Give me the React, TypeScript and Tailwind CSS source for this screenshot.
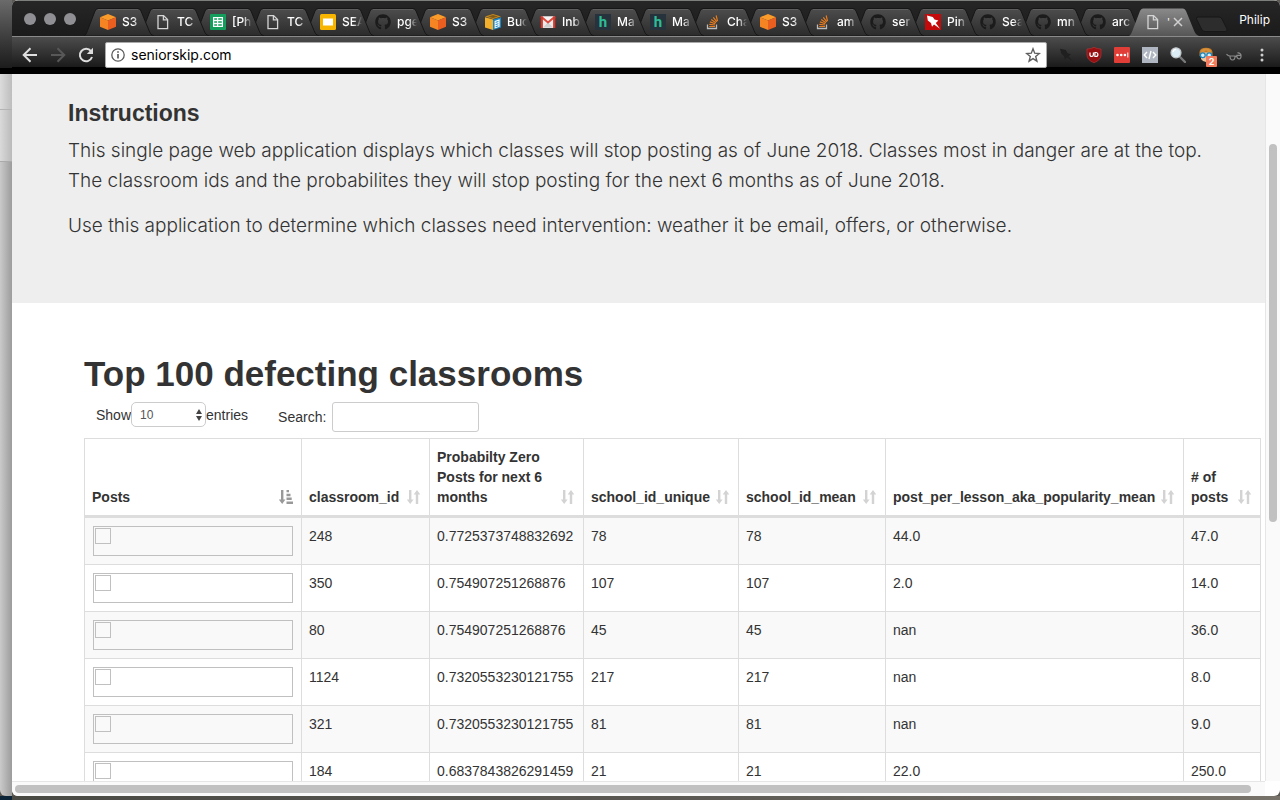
import type { ReactNode } from "react";
import { FaGithub } from "react-icons/fa";

const Cube = () => (
  <svg viewBox="0 0 16 16" className="size-4">
    <path d="M8 0 16 3.2 8 6.6 0 3.2Z" fill="#fb9b2a" />
    <path d="M0 3.2 8 6.6V16L0 12.8Z" fill="#f68422" />
    <path d="M16 3.2 8 6.6V16l8-3.2Z" fill="#ea5f1f" />
  </svg>
);

const Doc = () => (
  <svg viewBox="0 0 16 16" className="size-4" fill="none" stroke="#d4d4d4" strokeWidth="1.3">
    <path d="M3 1.6h5.6L12.6 5.6V14.6H3Z" />
    <path d="M8.4 1.8v4h4" />
  </svg>
);

const Sheet = () => (
  <svg viewBox="0 0 16 16" className="size-4">
    <rect width="16" height="16" rx="1" fill="#149e5b" />
    <path d="M3 3h10v10H3Z" fill="#fff" />
    <path d="M4.2 4.2H7v1.5H4.2ZM8.2 4.2h3.6v1.5H8.2ZM4.2 7.2H7v1.5H4.2ZM8.2 7.2h3.6v1.5H8.2ZM4.2 10.2H7v1.5H4.2ZM8.2 10.2h3.6v1.5H8.2Z" fill="#149e5b" />
  </svg>
);

const Slides = () => (
  <svg viewBox="0 0 16 16" className="size-4">
    <rect width="16" height="16" rx="1.5" fill="#f8b500" />
    <rect x="3" y="4.5" width="10" height="7" fill="#fff" />
  </svg>
);

const Bucket = () => (
  <svg viewBox="0 0 16 16" className="size-4">
    <path d="M8 0 16 2.6 8 5 0 2.6Z" fill="#c98a1c" />
    <path d="M8 1 13 2.6 8 4 3 2.6Z" fill="#7d5a1c" />
    <path d="M0 3.2 8 5.5V16L0 13.4Z" fill="#f3b02d" />
    <path d="M8 5.5 16 3.2V13.4L8 16Z" fill="#1f86c4" />
    <path d="M9.6 7 14.6 5.3V12.8L9.6 14.4Z" fill="#f4fbff" />
    <path d="M10.6 8.4l2.8-.9M10.6 10.6l2.8-.9M10.6 12.7l2.8-.9" stroke="#1f86c4" strokeWidth="1" />
  </svg>
);

const Gmail = () => (
  <svg viewBox="0 0 16 16" className="size-4">
    <path d="M1 2.5h14v11.5H1Z" fill="#ececec" />
    <path d="M3 13.5 8 8.6l5 4.9Z" fill="#cfcfcf" />
    <path d="M1 2.5 8 8.4 15 2.5" fill="#f5f5f5" stroke="#dd4b3e" strokeWidth="2" />
    <path d="M1.8 2.6V14M14.2 2.6V14" stroke="#d5392c" strokeWidth="2.2" />
  </svg>
);

const Hacker = () => (
  <span className="flex size-4 items-center justify-center bg-[#26323c] font-['Roboto',sans-serif] text-[15px] leading-4 font-bold text-[#2ebd95]">
    h
  </span>
);

const Stack = () => (
  <svg viewBox="0 0 16 16" className="size-4" fill="none">
    <path d="M2.5 10.5v4h9v-4" stroke="#bcbbbb" strokeWidth="1.3" />
    <path d="M4.2 12.5h5.8M4.3 10.3l5.7.7M4.9 7.9l5.4 1.9M6.2 5.5l4.7 3.3M8.3 3.3l3.5 4.6M11.2 1.5l1.3 5.7" stroke="#e87c1e" strokeWidth="1.2" />
  </svg>
);

const Octo = () => <FaGithub className="size-4 text-[#1b1b1b]" />;

const Pin = () => (
  <svg viewBox="0 0 16 16" className="size-4">
    <rect width="16" height="16" fill="#c40a0a" />
    <path d="M2 1.5 7.8 3 9.5 5.6 13.4 6.6 10.8 9 15 14.800 9 10.400 7 12.800 6 9 2.800 6.600Z" fill="#fff" />
  </svg>
);

const tabs: { icon: () => ReactNode; title: string }[] = [
  { icon: Cube, title: "S3" },
  { icon: Doc, title: "TC" },
  { icon: Sheet, title: "[Ph" },
  { icon: Doc, title: "TC" },
  { icon: Slides, title: "SEA" },
  { icon: Octo, title: "pge" },
  { icon: Cube, title: "S3" },
  { icon: Bucket, title: "Buc" },
  { icon: Gmail, title: "Inb" },
  { icon: Hacker, title: "Ma" },
  { icon: Hacker, title: "Ma" },
  { icon: Stack, title: "Cha" },
  { icon: Cube, title: "S3" },
  { icon: Stack, title: "am" },
  { icon: Octo, title: "ser" },
  { icon: Pin, title: "Pin" },
  { icon: Octo, title: "Sea" },
  { icon: Octo, title: "mn" },
  { icon: Octo, title: "arc" },
];

function TabShape({ active = false }: { active?: boolean }) {
  return (
    <svg viewBox="0 0 70 28" className="absolute inset-0 h-7 w-[70px]" aria-hidden="true">
      <defs>
        <linearGradient id={active ? "tab-on" : "tab-off"} x1="0" y1="0" x2="0" y2="1">
          <stop offset="0" stopColor={active ? "#8a8a8a" : "#4d4d4d"} />
          <stop offset="1" stopColor={active ? "#565656" : "#2b2b2b"} />
        </linearGradient>
      </defs>
      <path
        d="M0 28C2 27 2.5 25 3.5 22.5L11 3Q12 .5 14 .5H54Q56 .5 57 3L65 22.5C66 25 67 27 70 28Z"
        fill={active ? "url(#tab-on)" : "url(#tab-off)"}
        stroke={active ? "none" : "#161616"}
        strokeWidth="1"
      />
      {!active && <path d="M14 1.5H54" stroke="#5e5e5e" />}
    </svg>
  );
}

function TabStrip() {
  return (
    <div className="flex h-[35px] items-end bg-linear-to-b from-[#262626] to-[#1b1b1b]">
      <div className="flex w-[72px] shrink-0 gap-2 self-start pt-3 pl-3">
        <button aria-label="Close window" className="size-3 rounded-full bg-[#908f94]" />
        <button aria-label="Minimize window" className="size-3 rounded-full bg-[#908f94]" />
        <button aria-label="Zoom window" className="size-3 rounded-full bg-[#908f94]" />
      </div>
      <div className="isolate flex">
        {tabs.map(({ icon: Icon, title }, i) => (
          <button
            key={i}
            className="relative -mr-[15px] flex h-7 w-[70px] items-center text-left"
            style={{ zIndex: tabs.length - i }}
          >
            <TabShape />
            <span className="relative ml-4 flex w-[22px] shrink-0">
              <Icon />
            </span>
            <span className="relative w-5 font-medium whitespace-nowrap text-white [mask-image:linear-gradient(to_right,#000_55%,transparent)]">
              {title}
            </span>
          </button>
        ))}
        <div className="relative z-30 flex h-7 w-[70px] items-center">
          <TabShape active />
          <span className="relative ml-4 flex w-[22px] shrink-0">
            <Doc />
          </span>
          <span className="relative w-[6px] text-[10px] leading-4 text-white">'</span>
          <button aria-label="Close tab" className="relative flex">
            <svg viewBox="0 0 10 10" className="size-[10px]" stroke="#d0d0d0" strokeWidth="1.5">
              <path d="M1 1l8 8M9 1 1 9" />
            </svg>
          </button>
        </div>
        <button aria-label="New tab" className="mt-2 -ml-1 flex">
          <svg viewBox="0 0 34 17" className="h-[17px] w-[34px]">
            <path d="M3 1H24Q26 1 27 3L32 13Q33 15.5 30 15.5H10Q7.5 15.5 6.5 13L1.5 3Q1 1 3 1Z" fill="#2d2d2d" stroke="#171717" />
          </svg>
        </button>
      </div>
      <button className="mr-[10px] mb-2 ml-auto text-white">Philip</button>
    </div>
  );
}

function Toolbar() {
  return (
    <div className="flex h-[38px] items-center border-t border-t-[#8a8a8a] bg-[linear-gradient(to_bottom,#4c4c4c,#1a1a1a_82%,#000_82%)] px-[10px] pb-[2px]">
      <div className="flex shrink-0 gap-3 pr-[11px]">
        <button aria-label="Back" className="flex">
          <svg viewBox="0 0 16 16" className="size-4" fill="none" stroke="#dedede" strokeWidth="2">
            <path d="M15 8H2M8.5 1.2 1.7 8l6.8 6.8" />
          </svg>
        </button>
        <button aria-label="Forward" className="flex">
          <svg viewBox="0 0 16 16" className="size-4" fill="none" stroke="#585858" strokeWidth="2">
            <path d="M1 8h13M7.5 1.2 14.3 8l-6.8 6.8" />
          </svg>
        </button>
        <button aria-label="Reload" className="flex">
          <svg viewBox="0 0 16 16" className="size-4" fill="none">
            <path d="M13 4.2A6.2 6.2 0 1 0 14 10" stroke="#dedede" strokeWidth="2" />
            <path d="M15 .8V7H8.8Z" fill="#dedede" />
          </svg>
        </button>
      </div>
      <div className="flex h-[26px] min-w-0 flex-1 items-center rounded-xs border border-[#aaa] bg-white px-[5px]">
        <svg viewBox="0 0 14 14" className="size-[14px] shrink-0" fill="none" stroke="#5a5a5a">
          <circle cx="7" cy="7" r="6.2" strokeWidth="1.3" />
          <path d="M7 6v4.5M7 3.2v1.6" strokeWidth="1.7" />
        </svg>
        <input
          aria-label="Address"
          defaultValue="seniorskip.com"
          className="ml-[6px] min-w-0 flex-1 text-sm text-black outline-none"
        />
        <button aria-label="Bookmark this page" className="flex">
          <svg viewBox="0 0 16 16" className="size-4" fill="none" stroke="#5f5f5f" strokeWidth="1.4">
            <path d="M8 1.8 9.7 6.2l4.6.3-3.6 3 1.2 4.6L8 11.6l-3.9 2.5 1.2-4.6-3.6-3 4.6-.3Z" />
          </svg>
        </button>
      </div>
      <div className="flex shrink-0 items-center gap-3 pl-[11px]">
        <button aria-label="Pin" className="flex">
          <svg viewBox="0 0 16 16" className="size-4">
            <path d="M2 1.8 7.8 3 9.5 6.2 13 7.2 10.6 9.2 15 14.5 9 10.6 7 12.8 6 9.2 3.4 6.8Z" fill="#202020" />
          </svg>
        </button>
        <button aria-label="Ad blocker" className="flex">
          <svg viewBox="0 0 16 16" className="size-4">
            <path d="M8 .3Q11 2 15 2V8Q15 13 8 15.8 1 13 1 8V2Q5 2 8 .3Z" fill="#980f12" stroke="#b9393a" strokeWidth=".6" />
            <path d="M4 5.5v2.3a1.7 1.7 0 0 0 3.4 0V5.5M8.9 5.5v4h1a2 2 0 0 0 0-4Z" fill="none" stroke="#fff" strokeWidth="1.2" />
          </svg>
        </button>
        <button aria-label="Password manager" className="flex">
          <svg viewBox="0 0 16 16" className="size-4">
            <rect width="16" height="16" rx="1" fill="#e03e36" />
            <circle cx="3.5" cy="8" r="1.3" fill="#fff" />
            <circle cx="7.2" cy="8" r="1.3" fill="#fff" />
            <circle cx="10.9" cy="8" r="1.3" fill="#fff" />
            <path d="M13.8 5.5v5" stroke="#fff" />
          </svg>
        </button>
        <button aria-label="Source view" className="flex">
          <svg viewBox="0 0 16 16" className="size-4" fill="none" stroke="#fff" strokeWidth="1.4">
            <rect width="16" height="16" fill="#afb6c1" stroke="none" />
            <path d="M5 5 2.2 8 5 11M11 5l2.8 3L11 11M9 4 7 12" />
          </svg>
        </button>
        <button aria-label="Search tool" className="flex">
          <svg viewBox="0 0 16 16" className="size-4">
            <path d="m9.5 9.5 5.5 5.5" stroke="#77797b" strokeWidth="2.4" strokeLinecap="round" />
            <circle cx="6" cy="5.8" r="5" fill="#dcecf5" stroke="#c3c7ca" strokeWidth="1.2" />
            <path d="M3 5a3.2 3.2 0 0 1 3-2.6" stroke="#fff" fill="none" strokeWidth="1.2" />
          </svg>
        </button>
        <button aria-label="Reader, 2 notifications" className="relative flex">
          <svg viewBox="0 0 16 16" className="size-4">
            <path d="M1.5 9V5Q2 .8 8 .8T14.5 5V9Z" fill="#c07a2c" />
            <path d="M3 5.5h10V12Q11 15 8 15T3 12Z" fill="#f1c59c" />
            <path d="M2.5 6Q6 6 8 3.2 10 6 13.5 6L13 3.5Q11 1.2 8 1.2T3 3.5Z" fill="#d99036" />
            <circle cx="4.8" cy="8.3" r="2.4" fill="#d8f0fa" stroke="#1c87c0" strokeWidth="1.3" />
            <circle cx="11.2" cy="8.3" r="2.4" fill="#d8f0fa" stroke="#1c87c0" strokeWidth="1.3" />
          </svg>
          <span className="absolute top-[9px] left-2 size-[11px] rounded-[1px] bg-[#f47c5c] text-center text-[9px] leading-[11px] font-bold text-white">
            2
          </span>
        </button>
        <button aria-label="Glasses" className="flex">
          <svg viewBox="0 0 16 16" className="size-4" fill="none" stroke="#8a8a8a" strokeWidth="1.2">
            <path d="M.5 7.2Q2 9 4 9.2M8.8 10.5Q9.5 9 11 9.2M4 9h5Q9 13 6.500 13T4 9ZM10.800 8.300h4.200Q15.300 11.800 13 11.800T10.800 8.300ZM15 8.300Q15 6.300 11.500 5.600" />
          </svg>
        </button>
        <button aria-label="Browser menu" className="flex w-4 justify-center">
          <svg viewBox="0 0 4 16" className="h-4 w-1" fill="#d0d0d0">
            <circle cx="2" cy="3" r="1.5" />
            <circle cx="2" cy="8" r="1.5" />
            <circle cx="2" cy="13" r="1.5" />
          </svg>
        </button>
      </div>
    </div>
  );
}

const SortBoth = () => (
  <svg viewBox="0 0 14 14" className="size-[14px] shrink-0" fill="#d3d3d3">
    <path d="M2 0h2.4v9.5h2.2L3.2 14-.1 9.5H2ZM8.8 14h2.4V4.5h2.1L10 0 6.7 4.5H8.8Z" />
  </svg>
);

const SortAsc = () => (
  <svg viewBox="0 0 14 14" className="size-[14px] shrink-0" fill="#999">
    <path d="M2 0h2.4v9.5h2L3.2 14-.1 9.5H2ZM7.5 0h2.5v2.3H7.5ZM7.5 3.7h4v2.5h-4ZM7.5 7.6h5.2v2.5H7.5ZM7.5 11.5H14V14H7.5Z" />
  </svg>
);

const columns = [
  { label: "Posts", width: "" },
  { label: "classroom_id", width: "w-32" },
  { label: "Probabilty Zero Posts for next 6 months", width: "w-[154px]" },
  { label: "school_id_unique", width: "w-[155px]" },
  { label: "school_id_mean", width: "w-[147px]" },
  { label: "post_per_lesson_aka_popularity_mean", width: "w-[298px]" },
  { label: "# of posts", width: "w-[77px]" },
];

const rows = [
  ["248", "0.7725373748832692", "78", "78", "44.0", "47.0"],
  ["350", "0.754907251268876", "107", "107", "2.0", "14.0"],
  ["80", "0.754907251268876", "45", "45", "nan", "36.0"],
  ["1124", "0.7320553230121755", "217", "217", "nan", "8.0"],
  ["321", "0.7320553230121755", "81", "81", "nan", "9.0"],
  ["184", "0.6837843826291459", "21", "21", "22.0", "250.0"],
];

function ClassroomTable() {
  return (
    <table className="w-full table-fixed border-collapse border border-[#ddd]">
      <colgroup>
        {columns.map((c) => (
          <col key={c.label} className={c.width} />
        ))}
      </colgroup>
      <thead>
        <tr className="border-b-[3px] border-[#ddd]">
          {columns.map((c, i) => (
            <th key={c.label} className="h-[78px] border-x border-[#ddd] py-2 pr-2 pl-[7px] align-bottom font-bold">
              <button className="flex w-full items-end justify-between gap-1 text-left">
                <span>{c.label}</span>
                <span className="pb-[3px]">{i === 0 ? <SortAsc /> : <SortBoth />}</span>
              </button>
            </th>
          ))}
        </tr>
      </thead>
      <tbody>
        {rows.map((r) => (
          <tr key={r[0]} className="border-b border-[#ddd] odd:bg-[#f9f9f9]">
            <td className="border-x border-[#ddd] p-2">
              <div role="img" aria-label="Posts chart" className="h-[30px] border border-[#c0c0c0] p-px">
                <div className="size-4 border border-[#c0c0c0]" />
              </div>
            </td>
            {r.map((v, i) => (
              <td key={i} className="border-x border-[#ddd] py-2 pr-2 pl-[7px] align-top">
                {v}
              </td>
            ))}
          </tr>
        ))}
      </tbody>
    </table>
  );
}

function Page() {
  return (
    <main className="min-w-0 flex-1 overflow-hidden bg-white text-sm leading-5 text-[#333]">
      <section className="bg-[#eee] px-14 pt-[26px] pb-[62px]">
        <h3 className="mb-[10px] text-[23px] leading-[26px] font-bold">Instructions</h3>
        <div className="space-y-[15px] font-['Inter','Liberation_Sans',sans-serif] text-[19px] leading-[30px] font-light">
          <p>
            This single page web application displays which classes will stop posting as of June 2018. Classes most in
            danger are at the top.
            <br />
            The classroom ids and the probabilites they will stop posting for the next 6 months as of June 2018.
          </p>
          <p>Use this application to determine which classes need intervention: weather it be email, offers, or otherwise.</p>
        </div>
      </section>
      <section className="pt-[51px] pr-1 pl-[72px]">
        <h1 className="mb-2 text-[35px] leading-10 font-bold">Top 100 defecting classrooms</h1>
        <div className="mb-[6px] flex items-start pl-3">
          <label className="flex items-center">
            Show
            <span className="relative flex">
              <select className="h-[25px] w-[75px] appearance-none rounded-[5px] border border-[#ccc] bg-white pl-2 text-xs text-[#555]">
                <option>10</option>
                <option>25</option>
                <option>50</option>
                <option>100</option>
              </select>
              <svg viewBox="0 0 6 12" className="pointer-events-none absolute top-[7px] right-1 h-3 w-[6px]" fill="#444">
                <path d="M3 0 6 5H0ZM3 12 0 7h6Z" />
              </svg>
            </span>
            entries
          </label>
          <label className="ml-[30px] flex items-center gap-[6px]">
            Search:
            <input type="search" className="h-[30px] w-[147px] rounded-[3px] border border-[#ccc] bg-white px-2 outline-none" />
          </label>
        </div>
        <ClassroomTable />
      </section>
    </main>
  );
}

export default function App() {
  return (
    <div className="flex h-screen flex-col overflow-hidden bg-[#5b5853] font-['Liberation_Sans',Arial,sans-serif]">
      <div className="flex min-h-0 flex-1">
        <div className="flex w-3 shrink-0 flex-col overflow-hidden rounded-bl-md">
          <div className="h-[74px] border-b-[6px] border-black bg-linear-to-b from-[#6b6b6b] to-[#1c1c1c]" />
          <div className="h-9 border-b border-[#b4b4b4] bg-linear-to-r from-[#dcdcdc] to-[#bdbdbd]" />
          <div className="h-[52px] border-b border-[#aaa] bg-linear-to-r from-[#dadada] to-[#bababa]" />
          <div className="flex-1 bg-linear-to-r from-[#cacaca] to-[#9c9c9c]" />
        </div>
        <div className="flex min-w-0 flex-1 flex-col overflow-hidden rounded-t-md rounded-b-md bg-white">
          <header className="border-t border-[#7d7f7d] font-['Inter','Liberation_Sans',sans-serif] text-xs">
            <TabStrip />
            <Toolbar />
          </header>
          <div className="flex min-h-0 flex-1">
            <Page />
            <div className="w-[15px] shrink-0 border-l border-[#e6e6e6] bg-[#fafafa] pt-[70px] pl-[3px]">
              <div className="h-[378px] w-2 rounded-full bg-[#c1c1c1]" />
            </div>
          </div>
          <div className="mr-[15px] h-[15px] shrink-0 border-t border-[#e6e6e6] bg-[#fafafa] pt-[3px] pr-[14px] pl-[3px]">
            <div className="h-2 rounded-full bg-[#c1c1c1]" />
          </div>
        </div>
      </div>
      <div className="flex h-1 shrink-0">
        <div className="w-3 bg-[#0c2437]" />
        <div className="flex-1 bg-linear-to-r from-[#4a4a44] via-[#5b5853] to-[#77736a]" />
      </div>
    </div>
  );
}
